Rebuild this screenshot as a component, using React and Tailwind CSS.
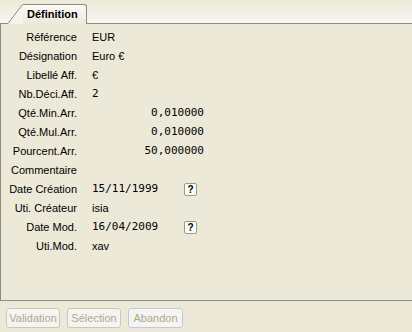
import React from "react";

const rows = [
  { label: "Référence", value: "EUR" },
  { label: "Désignation", value: "Euro €" },
  { label: "Libellé Aff.", value: "€" },
  { label: "Nb.Déci.Aff.", value: "2", mono: true },
  { label: "Qté.Min.Arr.", value: "0,010000", num: true },
  { label: "Qté.Mul.Arr.", value: "0,010000", num: true },
  { label: "Pourcent.Arr.", value: "50,000000", num: true },
  { label: "Commentaire", value: "" },
  { label: "Date Création", value: "15/11/1999", date: true },
  { label: "Uti. Créateur", value: "isia" },
  { label: "Date Mod.", value: "16/04/2009", date: true },
  { label: "Uti.Mod.", value: "xav" },
];

const mono = "font-['DejaVu_Sans_Mono',monospace] text-[11px]";

function Row({ r }) {
  return (
    <div className="flex h-[19px] items-center">
      <div className="w-[76px] text-right">{r.label}</div>
      <div className="ml-[15px] flex items-center">
        {r.num ? (
          <span className={`w-[112px] text-right ${mono}`}>{r.value}</span>
        ) : r.date ? (
          <>
            <span className={`w-[92px] ${mono}`}>{r.value}</span>
            <span className="flex h-[13px] w-[13px] items-center justify-center rounded-[2px] border border-[#9a998f] bg-[#fbfbf8] text-[10px] font-bold leading-none">
              ?
            </span>
          </>
        ) : r.mono ? (
          <span className={mono}>{r.value}</span>
        ) : (
          <span>{r.value}</span>
        )}
      </div>
    </div>
  );
}

function Btn({ children, focus }) {
  return (
    <div
      className={`flex h-[20px] items-center justify-center rounded-[3px] border bg-[#f5f4ef] text-[#aca899] ${
        focus ? "w-[55px] border-[#bcc8e6]" : "w-[54px] border-[#cac8bb]"
      }`}
    >
      {children}
    </div>
  );
}

export default function App() {
  return (
    <div className="flex h-[332px] w-[412px] flex-col bg-[#ECE9D8] font-['Liberation_Sans',Arial,sans-serif] text-[11px] text-black">
      {/* tab header */}
      <div className="flex h-[24px] bg-gradient-to-b from-[#ECE9D8] to-[#f8f7f2]">
        <div className="h-full w-[8px] border-b border-[#8f8d82]" />
        <svg width="15" height="24" className="shrink-0" viewBox="0 0 15 24">
          <polygon points="0,24 15,4 15,24" fill="#f4f3ec" />
          <line x1="0" y1="23.5" x2="14.5" y2="4.5" stroke="#8f8d82" strokeWidth="1" />
        </svg>
        <div className="mt-[4px] flex h-[20px] w-[64px] items-center rounded-tr-[3px] border-r border-t border-[#8f8d82] bg-gradient-to-b from-[#fbfbf8] to-[#ECE9D8] pl-[4px] font-bold">
          Définition
        </div>
        <div className="h-full flex-1 border-b border-[#8f8d82]" />
      </div>
      {/* panel */}
      <div className="flex h-[277px] flex-col border-b border-l border-[#8f8d82] pt-[4px]">
        {rows.map((r) => (
          <Row key={r.label} r={r} />
        ))}
      </div>
      {/* buttons */}
      <div className="flex gap-[7px] pl-[6px] pt-[7px]">
        <Btn>Validation</Btn>
        <Btn>Sélection</Btn>
        <Btn focus>Abandon</Btn>
      </div>
    </div>
  );
}
